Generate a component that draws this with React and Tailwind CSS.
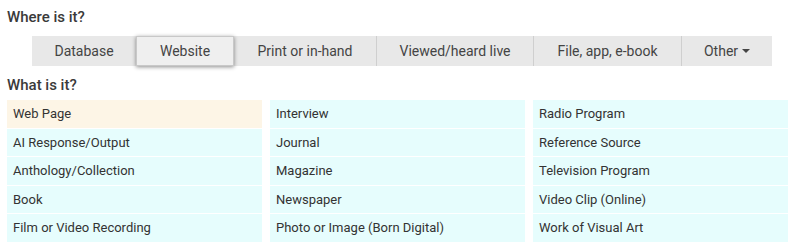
import React from 'react';

const tabs = [
  { label: 'Database', w: 'w-[104px]' },
  { label: 'Website', w: 'w-[98px]', active: true },
  { label: 'Print or in-hand', w: 'w-[142px]' },
  { label: 'Viewed/heard live', w: 'w-[157px]', sep: true },
  { label: 'File, app, e-book', w: 'w-[148px]', sep: true },
  { label: 'Other', w: 'w-[91px]', sep: true, caret: true },
];

const types = [
  'Web Page', 'Interview', 'Radio Program',
  'AI Response/Output', 'Journal', 'Reference Source',
  'Anthology/Collection', 'Magazine', 'Television Program',
  'Book', 'Newspaper', 'Video Clip (Online)',
  'Film or Video Recording', 'Photo or Image (Born Digital)', 'Work of Visual Art',
];

export default function App() {
  return (
    <div className="w-[791px] h-[247px] bg-white pl-[7px] pt-[7px] text-[#333] font-['Roboto',sans-serif]">
      <h3 className="text-[15px] leading-[20px] font-medium text-[#3a3a3a]">Where is it?</h3>

      {/* Where tabs */}
      <div className="ml-[25px] mt-[9px] flex w-[740px] h-[30px] bg-[#e8e8e8]">
        {tabs.map((t) => (
          <button
            key={t.label}
            className={`${t.w} h-full flex items-center justify-center text-[14px] text-[#444] ${
              t.sep ? 'border-l border-[#cfcfcf]' : ''
            } ${t.active ? 'bg-[#efefef] border border-[#c8c8c8] shadow-[0_1px_4px_rgba(0,0,0,0.45)] relative' : ''}`}
          >
            {t.label}
            {t.caret && (
              <span className="ml-[4px] w-0 h-0 border-l-[4px] border-r-[4px] border-t-[4px] border-l-transparent border-r-transparent border-t-[#444]" />
            )}
          </button>
        ))}
      </div>

      <h3 className="mt-[9px] text-[15px] leading-[20px] font-medium text-[#3a3a3a]">What is it?</h3>

      {/* What grid */}
      <div className="mt-[5px] grid grid-cols-[255px_255px_255px] gap-x-[8px] gap-y-[1px] w-[781px]">
        {types.map((t, i) => (
          <div
            key={t}
            className={`h-[27.5px] flex items-center pl-[6px] text-[13px] text-[#333] ${
              i === 0 ? 'bg-[#fdf5e6]' : 'bg-[#e6fdfd]'
            }`}
          >
            {t}
          </div>
        ))}
      </div>
    </div>
  );
}
